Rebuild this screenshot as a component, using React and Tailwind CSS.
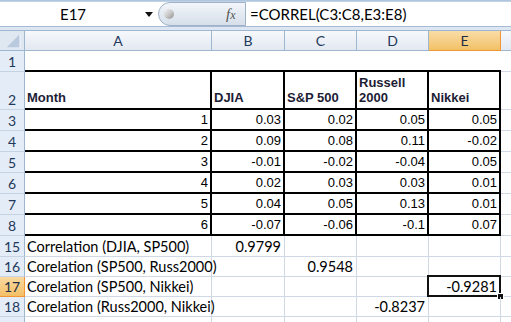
import React from 'react';

const ARIAL = "font-['Liberation_Sans',Arial,sans-serif]";
const CAL = "font-['Lato','Open_Sans',sans-serif]";

function RowHeader({ label, h, selected }) {
  return (
    <div
      className={`w-[25px] shrink-0 ${h} flex items-end justify-center pb-[1px] border-r border-b text-[14px] leading-[17px] ${CAL} ${
        selected
          ? 'bg-gradient-to-b from-[#f9d99f] to-[#f4c067] border-[#f29536] text-[#1e2f45]'
          : 'bg-[#e4ecf7] border-r-[#9eb6ce] border-b-[#c5d3e3] text-[#1e395b]'
      }`}
    >
      {label}
    </div>
  );
}

const W = ['w-[187px]', 'w-[73px]', 'w-[72px]', 'w-[72px]', 'w-[72px]'];

function TableRow({ h, label, cells, header }) {
  return (
    <div className={`flex ${h}`}>
      <RowHeader label={label} h={h} />
      {cells.map((c, i) => (
        <div
          key={i}
          className={`${W[i]} shrink-0 flex items-end border-b-2 border-r-2 border-black ${
            header
              ? `justify-start pl-[2px] pb-[3px] font-bold text-[13px] leading-[15px] text-[#1d1d35] ${ARIAL}`
              : `justify-end pr-[2px] pb-[2px] text-[13px] leading-[15px] text-black ${ARIAL}`
          }`}
        >
          <span className="whitespace-pre-line">{c}</span>
        </div>
      ))}
      <div className="flex-1 border-b border-[#d0d7e5]" />
    </div>
  );
}

function CorrRow({ h, label, text, col, value, selected }) {
  return (
    <div className={`flex ${h}`}>
      <RowHeader label={label} h={h} selected={selected} />
      {W.map((w, i) => (
        <div
          key={i}
          className={`${w} shrink-0 relative flex items-end border-r border-b border-[#d0d7e5] text-[14.5px] leading-[17px] text-black ${CAL} ${
            i === 0 ? 'justify-start pl-[2px] pb-[1px]' : 'justify-end pr-[3px] pb-[1px]'
          }`}
        >
          {i === 0 ? <span className="whitespace-nowrap">{text}</span> : i === col ? <span className="whitespace-nowrap">{value}</span> : null}
          {selected && i === col ? (
            <>
              <div className="absolute -left-[2px] -top-[2px] -right-[1px] -bottom-[1px] border-2 border-[#111]" />
              <div className="absolute -right-[4px] -bottom-[4px] w-[7px] h-[7px] bg-[#111] border border-white" />
            </>
          ) : null}
        </div>
      ))}
      <div className="flex-1 border-b border-[#d0d7e5]" />
    </div>
  );
}

export default function App() {
  const data = [
    ['1', '0.03', '0.02', '0.05', '0.05'],
    ['2', '0.09', '0.08', '0.11', '-0.02'],
    ['3', '-0.01', '-0.02', '-0.04', '0.05'],
    ['4', '0.02', '0.03', '0.03', '0.01'],
    ['5', '0.04', '0.05', '0.13', '0.01'],
    ['6', '-0.07', '-0.06', '-0.1', '0.07'],
  ];
  return (
    <div className="w-[511px] h-[322px] overflow-hidden bg-white select-none">
      {/* Formula bar */}
      <div className="h-[2px] bg-gradient-to-b from-[#a9c0da] to-[#c8d8ea]" />
      <div className="h-[24px] flex bg-white">
        <div className="w-[158px] shrink-0 relative">
          <span className={`absolute left-[60px] top-[3px] text-[15px] leading-[18px] text-black ${CAL}`}>E17</span>
          <svg className="absolute left-[145px] top-[10px]" width="8" height="5" viewBox="0 0 8 5">
            <path d="M0 0 H8 L4 5 Z" fill="#111" />
          </svg>
        </div>
        <div className="w-[88px] shrink-0 h-full relative rounded-l-[12px] border border-[#9fb1c7] bg-gradient-to-b from-[#f3f6fa] via-[#e4eaf2] to-[#d6dfea]">
          <div className="absolute left-[5px] top-[6px] w-[10px] h-[10px] rounded-full bg-gradient-to-br from-[#f5f5f5] via-[#c9c9c9] to-[#8f8f8f]" />
          <span className="absolute left-[67px] top-[2px] text-[15px] leading-[18px] italic text-[#555] font-['Liberation_Serif',serif]">
            f<span className="text-[12px]">x</span>
          </span>
        </div>
        <div className={`flex-1 pl-[4px] pt-[3px] text-[15px] leading-[18px] text-black whitespace-nowrap ${CAL}`}>
          =CORREL(C3:C8,E3:E8)
        </div>
      </div>
      <div className="h-[1px] bg-[#a7bad1]" />
      <div className="h-[3px] bg-[#dde7f3]" />
      {/* Column headers */}
      <div className={`flex h-[21px] border-t border-[#9eb6ce] text-[14px] leading-[17px] ${CAL}`}>
        <div className="w-[25px] shrink-0 h-full border-r border-b border-[#9eb6ce] bg-[#dfe7f1] relative">
          <svg className="absolute left-[6px] top-[3px]" width="15" height="14" viewBox="0 0 15 14">
            <path d="M14 0 V14 H0 Z" fill="#b9cade" />
            <path d="M14 0 V14 H0" fill="none" stroke="#f4f7fb" strokeWidth="1" />
          </svg>
        </div>
        {['A', 'B', 'C', 'D', 'E'].map((l, i) => (
          <div
            key={l}
            className={`${W[i]} shrink-0 h-full flex items-center justify-center border-r border-b ${
              l === 'E'
                ? 'bg-gradient-to-b from-[#f9dca6] to-[#f2c165] border-[#f29536] text-[#1e2f45]'
                : 'bg-gradient-to-b from-[#f6f8fb] to-[#e3e9f2] border-[#9eb6ce] text-[#1e395b]'
            }`}
          >
            {l}
          </div>
        ))}
        <div className="flex-1 h-full border-b border-[#9eb6ce] bg-gradient-to-b from-[#f6f8fb] to-[#e3e9f2]" />
      </div>
      {/* Row 1 */}
      <div className="flex h-[21px]">
        <RowHeader label="1" h="h-[21px]" />
        {W.map((w, i) => (
          <div key={i} className={`${w} shrink-0 border-b-2 border-black`} />
        ))}
        <div className="flex-1 border-b border-[#d0d7e5]" />
      </div>
      {/* Row 2 */}
      <TableRow h="h-[38px]" label="2" header cells={['Month', 'DJIA', 'S&P 500', 'Russell\n2000', 'Nikkei']} />
      {data.map((r, i) => (
        <TableRow key={i} h="h-[21px]" label={String(i + 3)} cells={r} />
      ))}
      <CorrRow h="h-[21px]" label="15" text="Correlation (DJIA, SP500)" col={1} value="0.9799" />
      <CorrRow h="h-[20px]" label="16" text="Corelation (SP500, Russ2000)" col={2} value="0.9548" />
      <CorrRow h="h-[20px]" label="17" text="Corelation (SP500, Nikkei)" col={4} value="-0.9281" selected />
      <CorrRow h="h-[20px]" label="18" text="Corelation (Russ2000, Nikkei)" col={3} value="-0.8237" />
      <CorrRow h="h-[20px]" label="" text="" col={9} value="" />
    </div>
  );
}
